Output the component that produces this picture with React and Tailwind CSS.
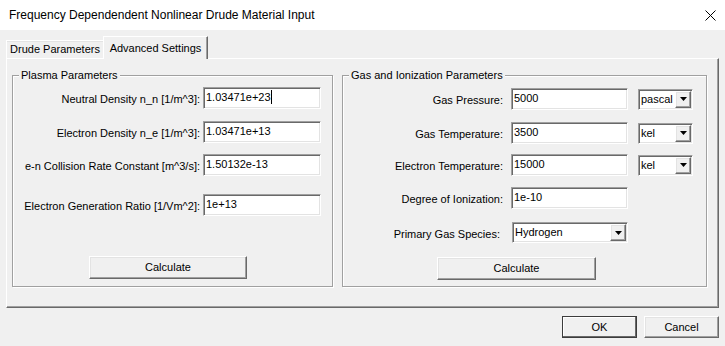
import React from "react";

const sunken =
  "bg-white border border-t-[#a0a0a0] border-l-[#a0a0a0] border-r-white border-b-white shadow-[inset_1px_1px_0_#696969,inset_-1px_-1px_0_#e3e3e3]";
const raised =
  "bg-[#f0f0f0] border border-t-white border-l-white border-r-[#696969] border-b-[#696969] shadow-[inset_-1px_-1px_0_#a0a0a0,inset_1px_1px_0_#e3e3e3]";

const TextBox = ({ value, width, caret }) => (
  <div className={`${sunken} h-[22px] ${width} pl-[2px] pt-[2px] leading-[14px] flex items-start`}>
    <span>{value}</span>
    {caret && <span className="inline-block w-px h-[14px] bg-black" />}
  </div>
);

const Arrow = () => (
  <svg width="7" height="4" viewBox="0 0 7 4">
    <polygon points="0,0 7,0 3.5,4" fill="#000" />
  </svg>
);

const Combo = ({ value, width }) => (
  <div className={`${sunken} h-[21px] ${width} flex items-center justify-between pl-[2px] pr-[1px]`}>
    <span>{value}</span>
    <div className={`${raised} w-[16px] h-[17px] flex items-center justify-center`}>
      <Arrow />
    </div>
  </div>
);

const Row = ({ label, labelWidth, gap, children, className = "" }) => (
  <div className={`flex items-center ${gap} ${className}`}>
    <div className={`${labelWidth} text-right pt-[3px]`}>{label}</div>
    {children}
  </div>
);

const Group = ({ title, children, className = "" }) => (
  <div
    className={`relative h-[212px] border border-[#a0a0a0] shadow-[inset_1px_1px_0_#fff,1px_1px_0_#fff] ${className}`}
  >
    <span className="absolute -top-[8px] left-[6px] px-[2px] bg-[#f0f0f0] leading-[14px]">
      {title}
    </span>
    {children}
  </div>
);

const Button = ({ children, className = "" }) => (
  <button className={`${raised} flex items-center justify-center ${className}`}>
    {children}
  </button>
);

export default function App() {
  return (
    <div className="w-[725px] h-[346px] bg-[#f0f0f0] text-[11px] text-black font-['Liberation_Sans',Arial,sans-serif] overflow-hidden">
      {/* Title bar */}
      <div className="h-[30px] bg-white flex items-center justify-between pl-[9px] pr-[9px]">
        <span className="text-[12px]">
          Frequency Dependendent Nonlinear Drude Material Input
        </span>
        <svg width="11" height="11" viewBox="0 0 11 11">
          <path d="M0.5 0.5 L10.5 10.5 M10.5 0.5 L0.5 10.5" stroke="#000" strokeWidth="1" />
        </svg>
      </div>

      {/* Tabs */}
      <div className="h-[28px] flex items-end pl-[6px]">
        <div className="h-[18px] w-[97px] border-t border-l border-white shadow-[inset_0_1px_0_#e3e3e3] flex items-center justify-center">
          Drude Parameters
        </div>
        <div className="relative z-10 -mb-px h-[23px] w-[105px] bg-[#f0f0f0] border-t border-l border-white border-r border-r-[#696969] shadow-[inset_-1px_0_0_#a0a0a0] flex items-start justify-center pt-[3px]">
          Advanced Settings
        </div>
      </div>

      {/* Tab panel */}
      <div className="mx-[6px] h-[250px] border border-t-white border-l-white border-r-[#696969] border-b-[#696969] shadow-[inset_-1px_-1px_0_#a0a0a0] pl-[5px] pt-[16px]">
        <div className="grid grid-cols-[321px_365px] gap-[9px]">
          <Group title="Plasma Parameters" className="pt-[11px]">
            <Row label="Neutral Density n_n [1/m^3]:" labelWidth="w-[187px]" gap="gap-[3px]">
              <TextBox value="1.03471e+23" width="w-[118px]" caret />
            </Row>
            <Row label="Electron Density n_e [1/m^3]:" labelWidth="w-[187px]" gap="gap-[3px]" className="mt-[12px]">
              <TextBox value="1.03471e+13" width="w-[118px]" />
            </Row>
            <Row label="e-n Collision Rate Constant [m^3/s]:" labelWidth="w-[187px]" gap="gap-[3px]" className="mt-[11px]">
              <TextBox value="1.50132e-13" width="w-[118px]" />
            </Row>
            <Row label="Electron Generation Ratio [1/Vm^2]:" labelWidth="w-[187px]" gap="gap-[3px]" className="mt-[18px]">
              <TextBox value="1e+13" width="w-[118px]" />
            </Row>
            <Button className="ml-[76px] mt-[40px] w-[158px] h-[23px]">Calculate</Button>
          </Group>

          <Group title="Gas and Ionization Parameters" className="pt-[12px]">
            <Row label="Gas Pressure:" labelWidth="w-[160px]" gap="gap-[8px]">
              <TextBox value="5000" width="w-[117px]" />
              <Combo value="pascal" width="w-[55px] ml-[2px]" />
            </Row>
            <Row label="Gas Temperature:" labelWidth="w-[160px]" gap="gap-[8px]" className="mt-[12px]">
              <TextBox value="3500" width="w-[117px]" />
              <Combo value="kel" width="w-[55px] ml-[2px]" />
            </Row>
            <Row label="Electron Temperature:" labelWidth="w-[160px]" gap="gap-[8px]" className="mt-[10px]">
              <TextBox value="15000" width="w-[117px]" />
              <Combo value="kel" width="w-[55px] ml-[2px]" />
            </Row>
            <Row label="Degree of Ionization:" labelWidth="w-[160px]" gap="gap-[8px]" className="mt-[11px]">
              <TextBox value="1e-10" width="w-[117px]" />
            </Row>
            <Row label="Primary Gas Species:" labelWidth="w-[157px]" gap="gap-[12px]" className="mt-[13px]">
              <Combo value="Hydrogen" width="w-[116px]" />
            </Row>
            <Button className="ml-[94px] mt-[14px] w-[159px] h-[23px]">Calculate</Button>
          </Group>
        </div>
      </div>

      {/* Footer buttons */}
      <div className="flex justify-end gap-[7px] pr-[6px] pt-[8px]">
        <Button className="w-[75px] h-[22px] border-[#3c3c3c]! shadow-[inset_-1px_-1px_0_#696969,inset_1px_1px_0_#fff]!">
          OK
        </Button>
        <Button className="w-[75px] h-[22px]">Cancel</Button>
      </div>
    </div>
  );
}
